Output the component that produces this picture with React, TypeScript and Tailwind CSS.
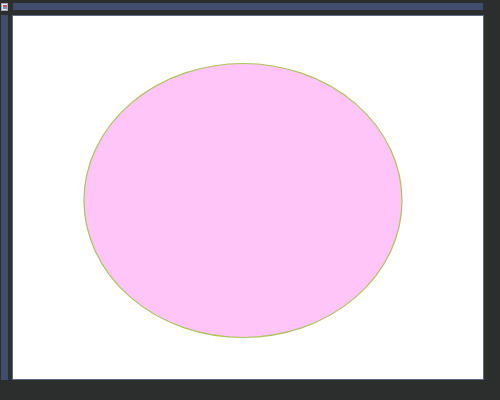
export default function App() {
  return (
    <div className="w-[500px] h-[400px] bg-[#2c2d2d] flex flex-col overflow-hidden">
      {/* Top ruler row */}
      <div className="flex items-start h-[15px] pt-[3px] pl-[1px]">
        <div className="w-[7px] h-[8px] bg-[#e4e4ea] border border-[#a9a9b4] flex flex-col items-center justify-center">
          <div className="w-[4px] h-[2px] bg-[#b0606e]" />
          <div className="w-[4px] h-[2px] bg-[#7f8fb8]" />
        </div>
        <div className="ml-[5px] w-[470px] h-[7px] bg-[#414d6c]" />
      </div>

      {/* Left ruler and canvas */}
      <div className="flex h-[365px] pl-[1px]">
        <div className="w-[7px] h-full bg-[#414d6c]" />
        <div className="ml-[4px] w-[472px] h-full bg-white border border-[#5f6a88]">
          <svg width="470" height="363" viewBox="0 0 470 363" className="block">
            <ellipse cx="230" cy="184.5" rx="159" ry="137" fill="#ffc4f8" stroke="#a9c45c" strokeWidth="1.2" />
          </svg>
        </div>
      </div>
    </div>
  );
}
